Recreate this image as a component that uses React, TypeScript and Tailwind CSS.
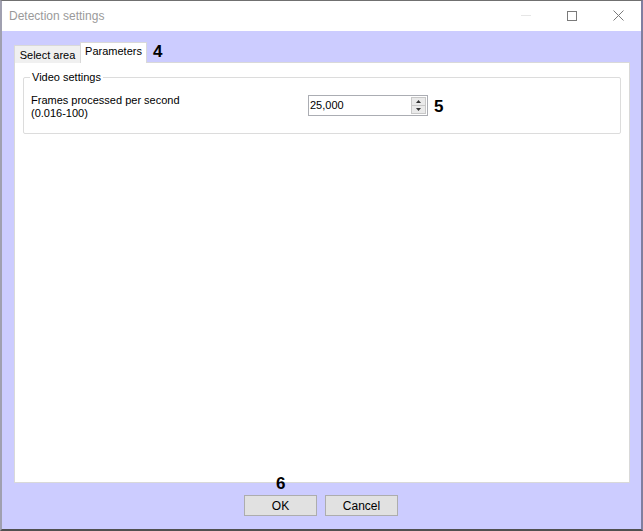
import React from "react";

export default function App() {
  return (
    <div className="w-[643px] h-[531px] relative overflow-hidden bg-[#ccccff] text-[11px] text-black" style={{ fontFamily: "'Liberation Sans', Arial, sans-serif" }}>
      <div className="absolute inset-0 border-l-[2px] border-l-[#a0a0b0] border-r-[2px] border-r-[#7f7fa0] border-b-[2px] border-b-[#505050] border-t border-t-[#707070] pointer-events-none z-10" />
      {/* Title bar */}
      <div className="h-[31px] bg-white flex items-center pl-[9px]">
        <span className="text-[12px] text-[#9a9a9a]">Detection settings</span>
        <div className="flex-1" />
        <div className="w-[46px] h-full flex items-center justify-center">
          <div className="w-[10px] h-px bg-[#e6e6e6]" />
        </div>
        <div className="w-[46px] h-full flex items-center justify-center">
          <div className="w-[10px] h-[10px] border border-[#7a7a7a]" />
        </div>
        <div className="w-[46px] h-full flex items-center justify-center mr-[2px]">
          <svg width="11" height="11" viewBox="0 0 11 11"><path d="M0.5 0.5 L10.5 10.5 M10.5 0.5 L0.5 10.5" stroke="#7a7a7a" strokeWidth="1" /></svg>
        </div>
      </div>

      {/* Tabs */}
      <div className="pl-[14px] pt-[12px] flex items-end h-[32px]">
        <div className="h-[18px] w-[67px] bg-[#f0f0f0] border border-[#d9d9d9] border-b-0 flex items-center justify-center pt-[1px]">
          <span>Select area</span>
        </div>
        <div className="h-[21px] w-[67px] bg-white border border-[#d9d9d9] border-b-0 -ml-px flex items-center justify-center pb-[3px] relative z-[1]">
          <span>Parameters</span>
        </div>
        <span className="ml-[6px] mb-[3px] text-[17px] font-bold leading-none">4</span>
      </div>

      {/* Tab content */}
      <div className="ml-[14px] mr-[13px] h-[421px] bg-white border border-[#d9d9d9] -mt-px pt-[13px] px-[8px]">
        <div className="relative border border-[#dcdcdc] rounded-[2px] h-[57px] mt-[1px]">
          <span className="absolute -top-[8px] left-[6px] bg-white px-[2px] leading-[14px]">Video settings</span>
          <div className="flex items-start pt-[16px] pl-[7px]">
            <div className="leading-[13px] w-[277px]">
              <div>Frames processed per second</div>
              <div>(0.016-100)</div>
            </div>
            <div className="mt-[1px] w-[120px] h-[21px] border border-[#abadb3] flex items-center">
              <span className="pl-[1px] flex-1">25,000</span>
              <div className="w-[15px] h-[17px] mr-[1px] flex flex-col border border-[#c8c8c8] bg-[#eaeaea]">
                <div className="flex-1 flex items-center justify-center border-b border-[#c8c8c8]">
                  <svg width="5" height="3" viewBox="0 0 5 3"><path d="M2.5 0 L5 3 L0 3 Z" fill="#333" /></svg>
                </div>
                <div className="flex-1 flex items-center justify-center">
                  <svg width="5" height="3" viewBox="0 0 5 3"><path d="M0 0 L5 0 L2.5 3 Z" fill="#333" /></svg>
                </div>
              </div>
            </div>
            <span className="ml-[6px] mt-[4px] text-[17px] font-bold leading-none">5</span>
          </div>
        </div>
      </div>

      {/* Bottom buttons */}
      <div className="relative flex justify-center gap-[8px] pt-[12px] pr-[1px] text-[12px]">
        <span className="absolute left-[276px] top-[-8px] text-[17px] font-bold leading-none">6</span>
        <div className="w-[73px] h-[21px] bg-[#e1e1e1] border border-[#adadad] flex items-center justify-center">OK</div>
        <div className="w-[73px] h-[21px] bg-[#e1e1e1] border border-[#adadad] flex items-center justify-center">Cancel</div>
      </div>
    </div>
  );
}
